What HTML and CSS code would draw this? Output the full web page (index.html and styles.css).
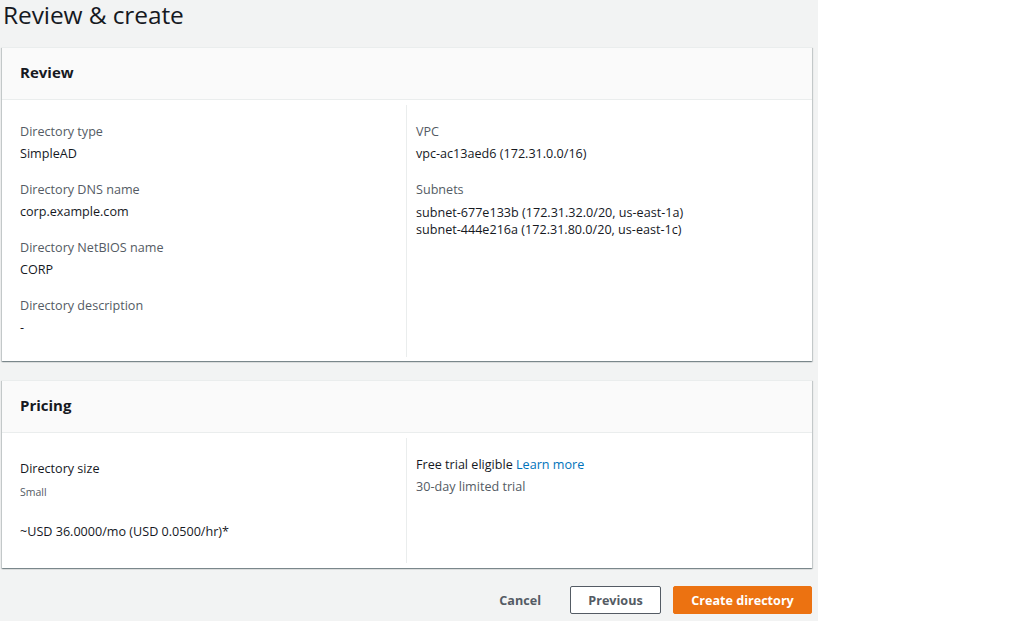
FILE: index.html
```html
<!DOCTYPE html>
<html>
<head>
<meta charset="utf-8">
<link rel="stylesheet" href="styles.css">
</head>
<body>
<div class="page">
  <h1 class="title">Review &amp; create</h1>
  <section class="card">
    <div class="card-header"><h2>Review</h2></div>
    <div class="card-body review">
      <div class="col">
        <div class="field"><div class="label">Directory type</div><div class="value">SimpleAD</div></div>
        <div class="field"><div class="label">Directory DNS name</div><div class="value">corp.example.com</div></div>
        <div class="field"><div class="label">Directory NetBIOS name</div><div class="value">CORP</div></div>
        <div class="field"><div class="label">Directory description</div><div class="value">-</div></div>
      </div>
      <div class="col col-right">
        <div class="field"><div class="label">VPC</div><div class="value">vpc-ac13aed6 (172.31.0.0/16)</div></div>
        <div class="field"><div class="label">Subnets</div><div class="value lines">subnet-677e133b (172.31.32.0/20, us-east-1a)<br>subnet-444e216a (172.31.80.0/20, us-east-1c)</div></div>
      </div>
    </div>
  </section>
  <section class="card">
    <div class="card-header"><h2>Pricing</h2></div>
    <div class="card-body pricing">
      <div class="col">
        <div class="size-label">Directory size</div>
        <div class="size-value">Small</div>
        <div class="price">~USD 36.0000/mo (USD 0.0500/hr)*</div>
      </div>
      <div class="col col-right">
        <div class="trial">Free trial eligible <a class="link" href="#">Learn more</a></div>
        <div class="trial-sub">30-day limited trial</div>
      </div>
    </div>
  </section>
  <div class="actions">
    <button class="btn btn-link">Cancel</button>
    <button class="btn btn-normal">Previous</button>
    <button class="btn btn-primary">Create directory</button>
  </div>
</div>
</body>
</html>
```

FILE: styles.css
```css
html, body {
  margin: 0;
  padding: 0;
  background: #ffffff;
  font-family: "Open Sans", "Noto Sans", Arial, sans-serif;
  color: #16191f;
}
.page {
  width: 818px;
  min-height: 621px;
  background: #f2f3f3;
  box-sizing: border-box;
  padding: 0 6px 0 2px;
}
.title {
  margin: 0;
  padding: 0 0 0 1px;
  font-size: 24.5px;
  font-weight: 400;
  line-height: 30px;
  height: 47px;
  letter-spacing: -0.1px;
}
.card {
  background: #ffffff;
  box-shadow: 0 1px 1px 0 rgba(0,28,36,.3), 1px 1px 1px 0 rgba(0,28,36,.15), -1px 1px 1px 0 rgba(0,28,36,.15);
  border-top: 1px solid #eaeded;
  margin-bottom: 19px;
}
.card-header {
  background: #fafafa;
  border-bottom: 1px solid #eaeded;
  height: 52px;
  display: flex;
  align-items: center;
  padding: 0 18px 3px 18px;
  box-sizing: border-box;
}
.card-header h2 {
  margin: 0;
  font-size: 15px;
  font-weight: 700;
  line-height: 20px;
}
.card-body {
  display: grid;
  grid-template-columns: 404px 1fr;
}
.card-body.review {
  padding: 5px 0 4px 0;
}
.col {
  padding: 16px 18px 0 18px;
}
.col-right {
  border-left: 1px solid #eaeded;
  padding-left: 9px;
}
.field {
  margin-bottom: 14px;
}
.review .col {
  padding-top: 16px;
  padding-bottom: 4px;
}
.label {
  font-size: 12.6px;
  line-height: 22px;
  color: #545b64;
}
.value {
  font-size: 12.6px;
  line-height: 22px;
  color: #16191f;
}
.value.lines {
  line-height: 17px;
  padding-top: 3px;
}
.card-body.pricing {
  padding: 5px 0 5px 0;
  height: 125px;
}
.pricing .col {
  padding-top: 20px;
}
.pricing .col-right {
  padding-top: 16px;
}
.size-label {
  font-size: 12.6px;
  line-height: 22px;
}
.size-value {
  font-size: 10.5px;
  line-height: 16px;
  margin-top: 4px;
  color: #545b64;
}
.price {
  font-size: 12.6px;
  line-height: 22px;
  margin-top: 21px;
}
.trial {
  font-size: 12.6px;
  line-height: 22px;
}
.link {
  color: #0073bb;
  text-decoration: none;
}
.trial-sub {
  font-size: 12.6px;
  line-height: 22px;
  color: #545b64;
}
.actions {
  display: flex;
  justify-content: flex-end;
  align-items: center;
  margin-top: -1px;
}
.btn {
  font-family: inherit;
  font-size: 12.6px;
  font-weight: 700;
  height: 28px;
  padding: 0;
  border-radius: 2px;
  white-space: nowrap;
  cursor: pointer;
}
.btn-link {
  background: transparent;
  border: 1px solid transparent;
  color: #545b64;
  padding: 0 15px;
  margin-right: 13px;
}
.btn-normal {
  background: #ffffff;
  border: 1px solid #545b64;
  color: #545b64;
  width: 91px;
  margin-right: 12px;
}
.btn-primary {
  background: #ec7211;
  border: 1px solid #ec7211;
  color: #ffffff;
  width: 139px;
}
```
